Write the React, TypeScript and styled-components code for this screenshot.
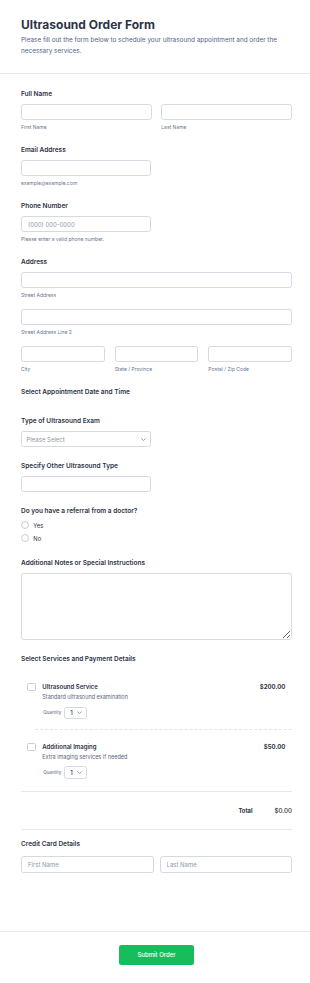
import React from "react";
import styled, { createGlobalStyle } from "styled-components";

const GlobalStyle = createGlobalStyle`
  body {
    margin: 0;
    background: #ffffff;
    font-family: Inter, "Noto Sans", "Liberation Sans", sans-serif;
    color: #2c3345;
  }
  * {
    box-sizing: border-box;
  }
`;

const Page = styled.div`
  width: 310px;
  min-height: 983px;
  background: #fff;
`;

const Header = styled.header`
  padding: 18px 18px 16px 21px;
  border-bottom: 1px solid #e6e8ee;

  h1 {
    margin: 0 0 2.5px;
    font-size: 12px;
    line-height: 14px;
    font-weight: 700;
    color: #2c3345;
  }

  p {
    margin: 0;
    font-size: 6.4px;
    line-height: 11px;
    color: #55628a;
  }
`;

const Form = styled.form`
  padding: 16.5px 18px 58px 21px;
`;

const Field = styled.div<{ $gap?: number }>`
  margin-bottom: ${(p) => (p.$gap ?? 15)}px;
`;

const Label = styled.div<{ $mb?: number }>`
  font-size: 6.5px;
  line-height: 8px;
  font-weight: 600;
  color: #2c3345;
  margin-bottom: ${(p) => (p.$mb ?? 6)}px;
`;

const Input = styled.input<{ $w?: number; $h?: number }>`
  display: block;
  width: ${(p) => (p.$w ? `${p.$w}px` : "100%")};
  height: ${(p) => p.$h ?? 16}px;
  border: 1px solid #d5d9e2;
  border-radius: 2.5px;
  padding: 0 6px;
  font-family: inherit;
  font-size: 6px;
  color: #2c3345;
  background: #fff;
  outline: none;

  &::placeholder {
    color: #8f96a8;
  }
`;

const Sub = styled.div`
  margin-top: 4px;
  font-size: 5px;
  line-height: 7px;
  color: #6b7591;
`;

const Row = styled.div<{ $cols: number; $gap?: number; $mt?: number }>`
  display: grid;
  grid-template-columns: repeat(${(p) => p.$cols}, 1fr);
  column-gap: ${(p) => p.$gap ?? 10}px;
  margin-top: ${(p) => p.$mt ?? 0}px;
`;

const SelectBox = styled.div<{ $w: number; $h: number }>`
  display: flex;
  align-items: center;
  justify-content: space-between;
  width: ${(p) => p.$w}px;
  height: ${(p) => p.$h}px;
  border: 1px solid #d5d9e2;
  border-radius: 2.5px;
  padding: 0 4.5px;
  background: #fff;

  span {
    font-size: 6px;
    color: #8f96a8;
  }
`;

const QtySelect = styled(SelectBox)`
  padding: 0 4px 0 5px;

  span {
    color: #2c3345;
    font-weight: 500;
  }
`;

const TextArea = styled.textarea`
  display: block;
  width: 100%;
  height: 67px;
  border: 1px solid #d5d9e2;
  border-radius: 2.5px;
  font-family: inherit;
  outline: none;
`;

const RadioRow = styled.label`
  display: flex;
  align-items: center;
  gap: 4.3px;
  height: 12.7px;
  font-size: 5.8px;
  color: #2c3345;
`;

const RadioDot = styled.span`
  width: 8px;
  height: 8px;
  border: 1px solid #c8cdd9;
  border-radius: 50%;
  background: #fff;
`;

const Products = styled.div`
  padding-top: 19.5px;
`;

const Product = styled.div<{ $pt: number; $pb: number }>`
  display: grid;
  grid-template-columns: 9px 1fr auto;
  column-gap: 6.6px;
  padding: ${(p) => p.$pt}px 6.7px ${(p) => p.$pb}px 5.7px;
`;

const Check = styled.span`
  width: 9px;
  height: 8.5px;
  border: 1px solid #c8cdd9;
  border-radius: 1.5px;
  background: #fff;
`;

const ProductName = styled.div`
  font-size: 6px;
  line-height: 8px;
  font-weight: 600;
  color: #2c3345;
`;

const ProductDesc = styled.div`
  margin-top: 2px;
  font-size: 5.5px;
  line-height: 8px;
  color: #57647e;
`;

const QtyRow = styled.div`
  display: flex;
  align-items: center;
  gap: 3px;
  margin-top: 5.6px;
  font-size: 4.5px;
  color: #57647e;
  padding-left: 1px;
`;

const Price = styled.div`
  font-size: 6px;
  line-height: 8px;
  font-weight: 700;
  color: #2c3345;
`;

const DashedRule = styled.div`
  margin-left: 14px;
  border-top: 1px dashed #e3e5eb;
`;

const TotalRow = styled.div`
  display: flex;
  justify-content: flex-end;
  align-items: center;
  height: 39.4px;
  border-top: 1px solid #e6e8ee;
  border-bottom: 1px solid #e6e8ee;
  margin-bottom: 10px;

  b {
    font-size: 5.8px;
    font-weight: 700;
    color: #2c3345;
    margin-right: 22px;
  }

  span {
    font-size: 6.2px;
    font-weight: 500;
    color: #2c3345;
  }
`;

const Footer = styled.footer`
  display: flex;
  justify-content: center;
  padding: 12.7px 18px 16px 21px;
  border-top: 1px solid #e6e8ee;
`;

const SubmitButton = styled.button`
  width: 74.7px;
  height: 20px;
  border: none;
  border-radius: 2.5px;
  background: #18bd5b;
  color: #fff;
  font-family: inherit;
  font-size: 6px;
  font-weight: 500;
  cursor: pointer;
`;

const Chevron = () => (
  <svg width="5" height="3.5" viewBox="0 0 10 7" fill="none">
    <path d="M1.5 1.5 L5 5 L8.5 1.5" stroke="#6b7591" strokeWidth="1.4" strokeLinecap="round" strokeLinejoin="round" />
  </svg>
);

const items = [
  { name: "Ultrasound Service", desc: "Standard ultrasound examination", price: "$200.00" },
  { name: "Additional Imaging", desc: "Extra imaging services if needed", price: "$50.00" },
];

export default function App() {
  return (
    <Page>
      <GlobalStyle />
      <Header>
        <h1>Ultrasound Order Form</h1>
        <p>
          Please fill out the form below to schedule your ultrasound appointment and order the
          necessary services.
        </p>
      </Header>

      <Form onSubmit={(e) => e.preventDefault()}>
        <Field>
          <Label>Full Name</Label>
          <Row $cols={2} $gap={9.6}>
            <div>
              <Input />
              <Sub>First Name</Sub>
            </div>
            <div>
              <Input />
              <Sub>Last Name</Sub>
            </div>
          </Row>
        </Field>

        <Field>
          <Label>Email Address</Label>
          <Input $w={130} />
          <Sub>example@example.com</Sub>
        </Field>

        <Field>
          <Label>Phone Number</Label>
          <Input $w={130} placeholder="(000) 000-0000" />
          <Sub>Please enter a valid phone number.</Sub>
        </Field>

        <Field>
          <Label>Address</Label>
          <Input />
          <Sub>Street Address</Sub>
          <Row $cols={1} $mt={10.4}>
            <div>
              <Input />
              <Sub>Street Address Line 2</Sub>
            </div>
          </Row>
          <Row $cols={3} $gap={10} $mt={9.6}>
            <div>
              <Input />
              <Sub>City</Sub>
            </div>
            <div>
              <Input />
              <Sub>State / Province</Sub>
            </div>
            <div>
              <Input />
              <Sub>Postal / Zip Code</Sub>
            </div>
          </Row>
        </Field>

        <Field $gap={21.4}>
          <Label $mb={0}>Select Appointment Date and Time</Label>
        </Field>

        <Field>
          <Label>Type of Ultrasound Exam</Label>
          <SelectBox $w={130} $h={16}>
            <span>Please Select</span>
            <Chevron />
          </SelectBox>
        </Field>

        <Field>
          <Label>Specify Other Ultrasound Type</Label>
          <Input $w={130} />
        </Field>

        <Field>
          <Label $mb={3.7}>Do you have a referral from a doctor?</Label>
          <RadioRow>
            <RadioDot />
            Yes
          </RadioRow>
          <RadioRow>
            <RadioDot />
            No
          </RadioRow>
        </Field>

        <Field>
          <Label>Additional Notes or Special Instructions</Label>
          <TextArea />
        </Field>

        <Label $mb={0}>Select Services and Payment Details</Label>
        <Products>
          {items.map((it, i) => (
            <React.Fragment key={it.name}>
              {i > 0 && <DashedRule />}
              <Product $pt={i === 0 ? 0 : 12.3} $pb={i === 0 ? 10.3 : 12}>
                <Check />
                <div>
                  <ProductName>{it.name}</ProductName>
                  <ProductDesc>{it.desc}</ProductDesc>
                  <QtyRow>
                    Quantity
                    <QtySelect $w={22.4} $h={12.4}>
                      <span>1</span>
                      <Chevron />
                    </QtySelect>
                  </QtyRow>
                </div>
                <Price>{it.price}</Price>
              </Product>
            </React.Fragment>
          ))}
        </Products>

        <TotalRow>
          <b>Total</b>
          <span>$0.00</span>
        </TotalRow>

        <Label $mb={8.6}>Credit Card Details</Label>
        <Row $cols={2} $gap={6}>
          <Input $h={16.7} placeholder="First Name" />
          <Input $h={16.7} placeholder="Last Name" />
        </Row>
      </Form>

      <Footer>
        <SubmitButton type="submit">Submit Order</SubmitButton>
      </Footer>
    </Page>
  );
}
